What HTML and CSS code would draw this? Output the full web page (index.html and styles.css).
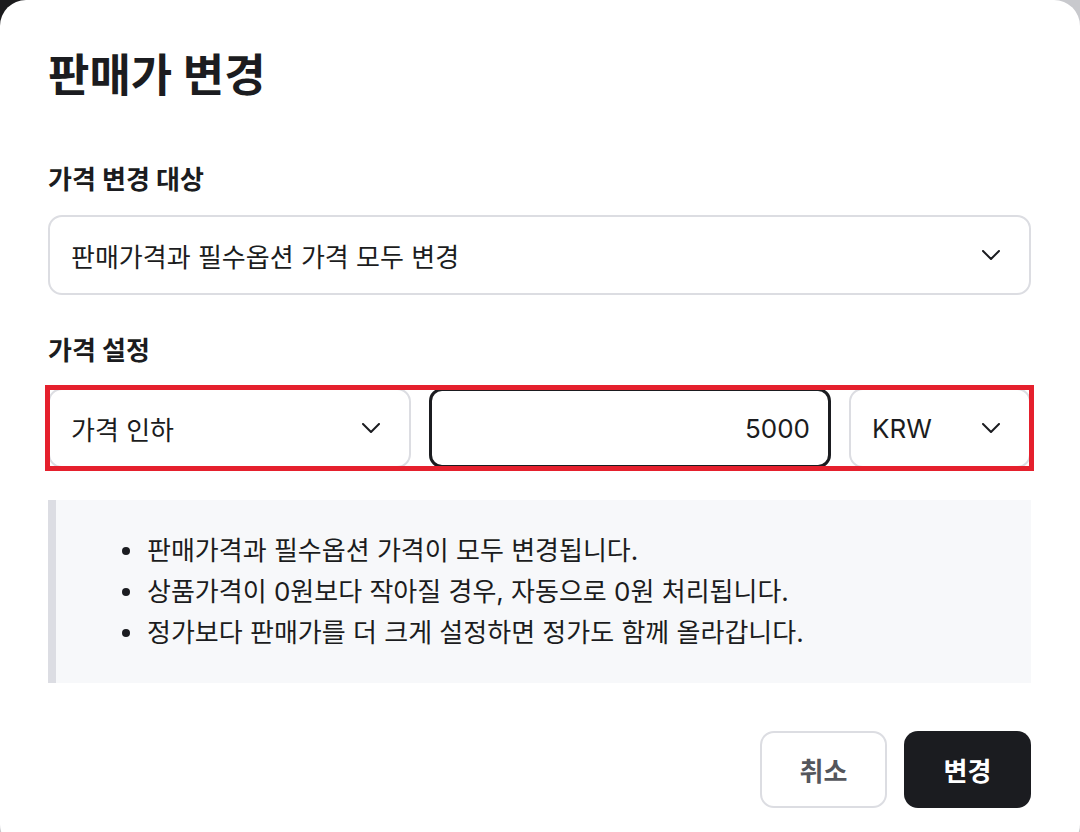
FILE: index.html
```html
<!DOCTYPE html>
<html lang="ko">
<head>
<meta charset="utf-8">
<title>판매가 변경</title>
<link rel="stylesheet" href="styles.css">
</head>
<body>
<div class="modal">
  <h1 class="title">판매가 변경</h1>

  <div class="label first">가격 변경 대상</div>
  <div class="select full">
    <span>판매가격과 필수옵션 가격 모두 변경</span>
    <svg class="chev" viewBox="0 0 18 10" width="18" height="10"><path d="M1 1 L9 9 L17 1" fill="none" stroke="#1b1c20" stroke-width="2" stroke-linecap="round" stroke-linejoin="round"/></svg>
  </div>

  <div class="label second">가격 설정</div>
  <div class="price-row">
    <div class="select">
      <span>가격 인하</span>
      <svg class="chev" viewBox="0 0 18 10" width="18" height="10"><path d="M1 1 L9 9 L17 1" fill="none" stroke="#1b1c20" stroke-width="2" stroke-linecap="round" stroke-linejoin="round"/></svg>
    </div>
    <div class="amount"><span>5000</span></div>
    <div class="select">
      <span>KRW</span>
      <svg class="chev" viewBox="0 0 18 10" width="18" height="10"><path d="M1 1 L9 9 L17 1" fill="none" stroke="#1b1c20" stroke-width="2" stroke-linecap="round" stroke-linejoin="round"/></svg>
    </div>
  </div>

  <div class="notice">
    <ul>
      <li>판매가격과 필수옵션 가격이 모두 변경됩니다.</li>
      <li>상품가격이 0원보다 작아질 경우, 자동으로 0원 처리됩니다.</li>
      <li>정가보다 판매가를 더 크게 설정하면 정가도 함께 올라갑니다.</li>
    </ul>
  </div>

  <div class="actions">
    <button class="btn cancel">취소</button>
    <button class="btn confirm">변경</button>
  </div>
</div>
</body>
</html>
```

FILE: styles.css
```css
html, body {
  margin: 0;
  padding: 0;
  height: 100%;
  overflow: hidden;
}
body {
  background: linear-gradient(135deg, #1b1b1d 0, #1b1b1d 40px, #c8c9cd 40px);
  font-family: "Inter", "Noto Sans CJK KR", sans-serif;
  color: #1b1c20;
}
.modal {
  box-sizing: border-box;
  width: 1080px;
  height: 850px;
  background: #ffffff;
  border-radius: 26px;
  padding: 50px 49px 0 48px;
}
.title {
  margin: 0;
  font-size: 45px;
  line-height: 52px;
  font-weight: 700;
  letter-spacing: 0;
}
.label {
  font-size: 26px;
  line-height: 36px;
  font-weight: 700;
}
.label.first { margin-top: 60px; }
.label.second { margin-top: 38px; }
.select {
  box-sizing: border-box;
  height: 80px;
  border: 2px solid #dcdde2;
  border-radius: 14px;
  background: #fff;
  display: flex;
  align-items: center;
  justify-content: space-between;
  padding: 0 29px 0 21px;
  font-size: 26px;
}
.select.full { margin-top: 17px; }
.chev { display: block; flex: none; }
.price-row {
  margin-top: 19px;
  display: grid;
  grid-template-columns: 363px 402px 1fr;
  column-gap: 18px;
  outline: 5px solid #e5202d;
  outline-offset: -2px;
}
.amount {
  box-sizing: border-box;
  height: 80px;
  border: 3px solid #1b1c20;
  border-radius: 13px;
  display: flex;
  align-items: center;
  justify-content: flex-end;
  padding: 0 18px;
  font-size: 26px;
}
.notice {
  margin-top: 32px;
  background: #f7f8fa;
  border-left: 8px solid #dcdde3;
  padding: 30px 0 30px 66px;
}
.notice ul {
  margin: 0;
  padding: 0;
  list-style: none;
}
.notice li {
  display: flex;
  align-items: center;
  font-size: 26px;
  line-height: 41px;
}
.notice li::before {
  content: "";
  width: 8px;
  height: 8px;
  border-radius: 50%;
  background: #1b1c20;
  margin-right: 17px;
  flex: none;
}
.actions {
  margin-top: 48px;
  display: flex;
  justify-content: flex-end;
  gap: 17px;
}
.btn {
  box-sizing: border-box;
  width: 127px;
  height: 77px;
  border-radius: 14px;
  font-family: "Inter", "Noto Sans CJK KR", sans-serif;
  font-size: 26px;
  font-weight: 700;
  cursor: pointer;
}
.cancel {
  background: #fff;
  border: 2px solid #dcdde2;
  color: #54565c;
}
.confirm {
  background: #1b1c20;
  border: none;
  color: #fff;
}
```
